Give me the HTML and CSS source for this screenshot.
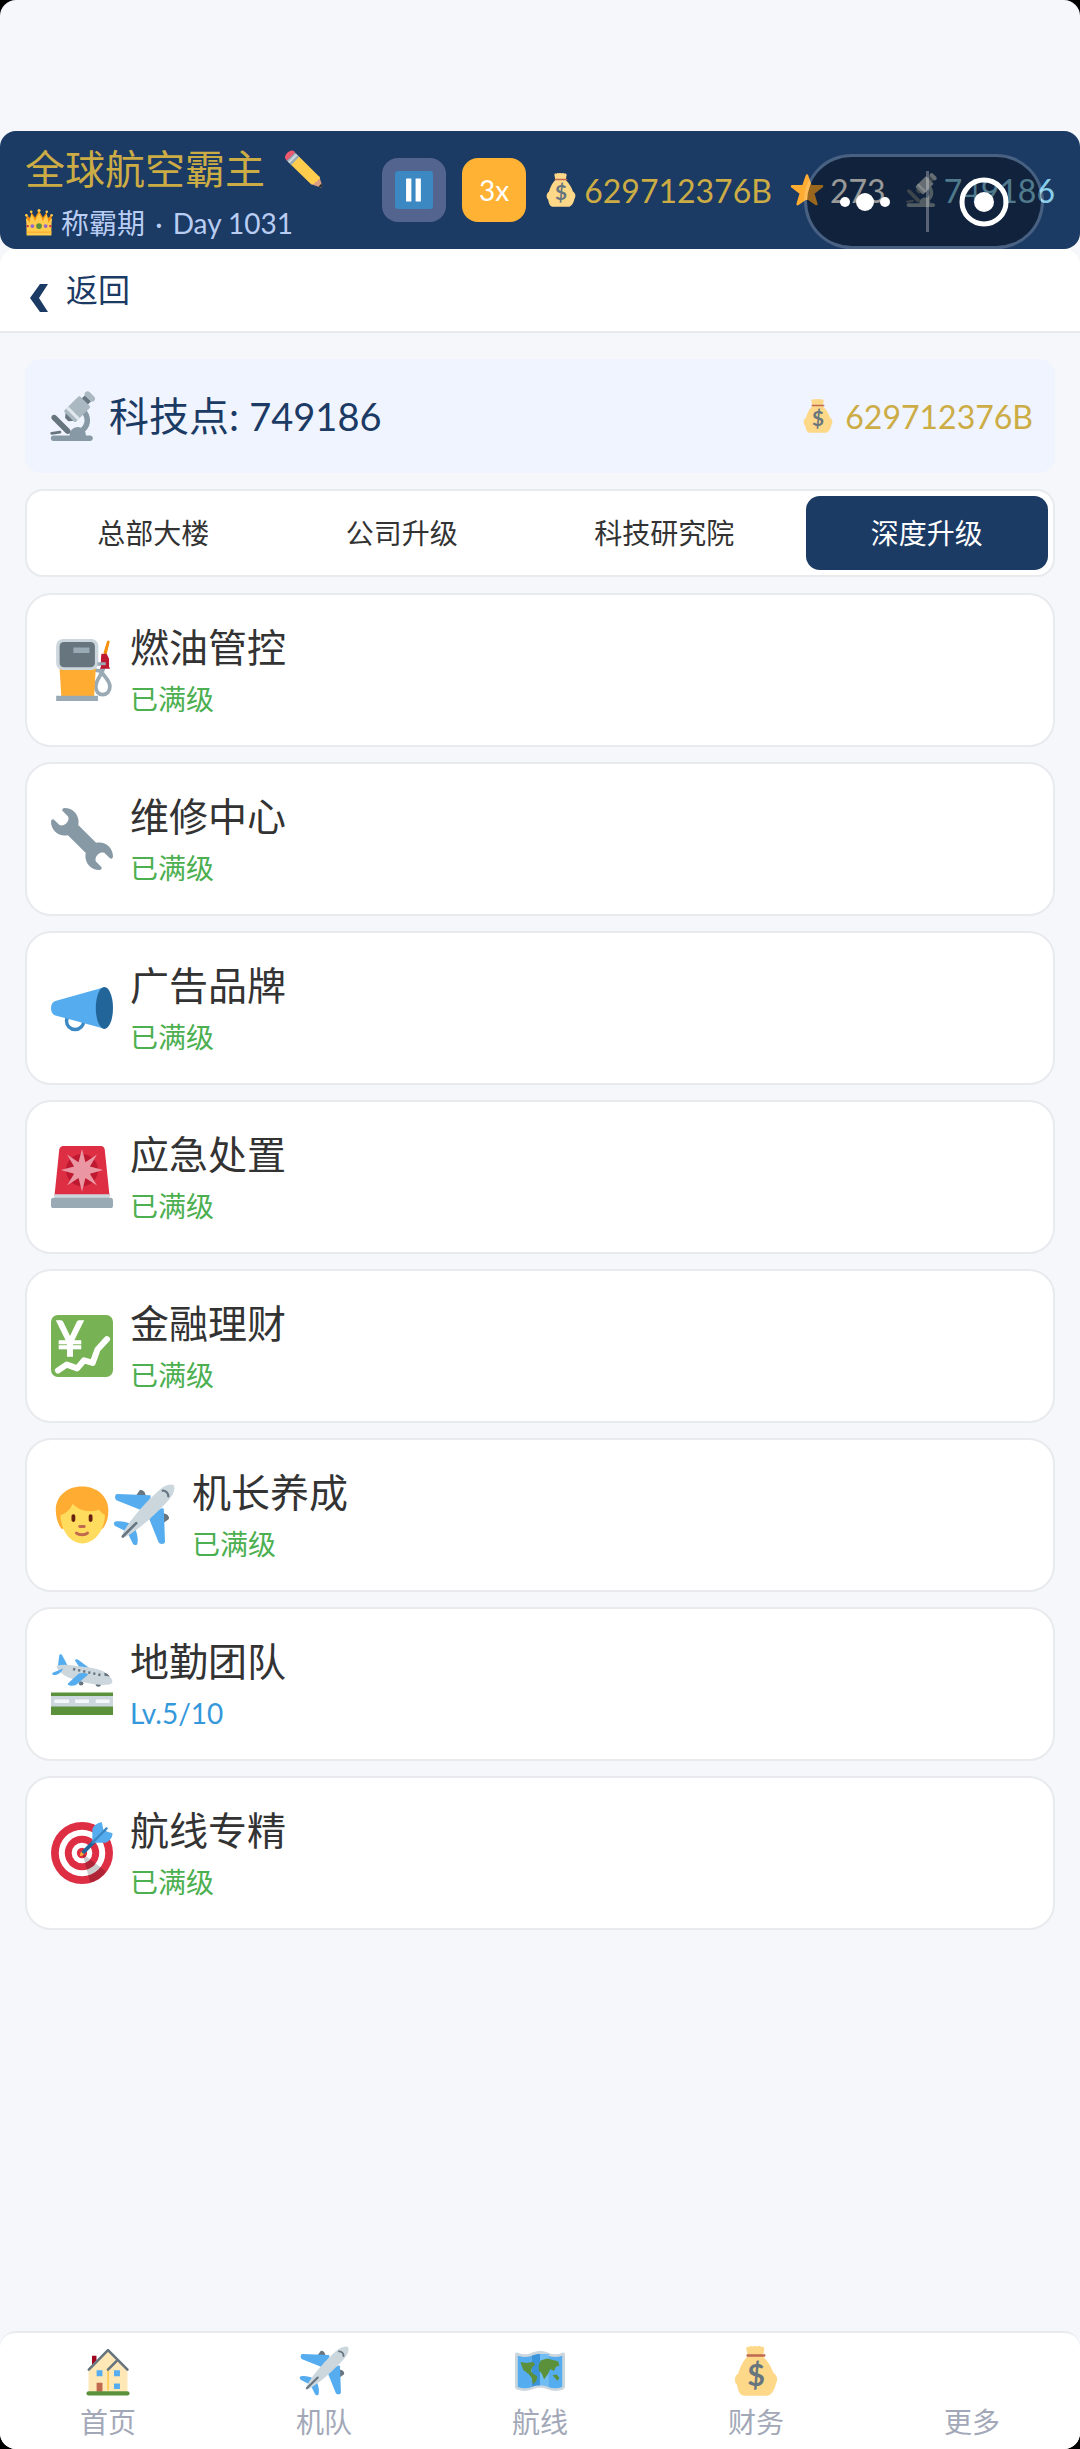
FILE: index.html
```
<!DOCTYPE html>
<html lang="zh-CN">
<head>
  <meta charset="UTF-8" />
  <meta name="viewport" content="width=device-width, initial-scale=1.0" />
  <title>全球航空霸主</title>
  <link rel="stylesheet" href="styles.css">
</head>
<body>
  <!-- icones -->
  <svg class="sprite" aria-hidden="true">
    <symbol id="i-microscope" viewBox="0 0 36 36">
      <path fill="#66757F" d="M19.78 21.345l-6.341-6.342-.389 4.38 2.35 2.351z"/>
      <path fill="#8899A6" d="M31 32h-3c0-3.314-2.63-6-5.875-6-3.244 0-5.875 2.686-5.875 6H4.73c-1.104 0-2 .896-2 2s.896 2 2 2H31c1.104 0 2-.896 2-2s-.896-2-2-2z"/>
      <path fill="#8899A6" d="M20 10v4c3.866 0 7 3.134 7 7s-3.134 7-7 7h-2l2 4c6.075 0 11-4.925 11-11s-4.925-11-11-11z"/>
      <path fill="#67757F" d="M16.414 30.414c-.781.781-2.047.781-2.828 0l-9.899-9.9c-.781-.781-.781-2.047 0-2.828.781-.781 2.047-.781 2.829 0l9.899 9.9c.78.781.78 2.047-.001 2.828zm-7.225-1.786c.547-.077 1.052.304 1.129.851.077.547-.305 1.053-.851 1.129l-5.942.834c-.547.077-1.052-.305-1.129-.851-.077-.547.305-1.053.852-1.13l5.941-.833z"/>
      <path fill="#66757F" d="M27.341 2.98l4.461 4.461-3.806 3.807-4.461-4.461z"/>
      <path fill="#AAB8C2" d="M34.037 7.083c-.827.827-2.17.827-2.997 0l-3.339-3.34c-.827-.826-.827-2.169 0-2.996.827-.826 2.17-.826 2.995 0l3.342 3.34c.826.827.826 2.168-.001 2.996zm-14.56 15.026l-6.802-6.803c-.389-.389-.389-1.025 0-1.414l9.858-9.858c.389-.389 1.025-.389 1.414 0l6.801 6.803c.389.389.389 1.025 0 1.414l-9.858 9.858c-.388.389-1.024.389-1.413 0z"/>
      <path fill="#E1E8ED" d="M13.766 12.8l1.638-1.637 8.216 8.216-1.638 1.637z"/>
    </symbol>

    <symbol id="i-money" viewBox="0 0 36 36">
      <path fill="#FDD888" d="M12 7.500L11 1.800c0-1 1-1.600 2-1 .8-1 2-1 2.700-.3.900-.8 2.300-.8 3.100 0 .9-.8 2.100-.7 2.900.2 1-.5 2.200 0 2.300 1.100l-1 5.700c3 2.500 6 7.500 7.700 12 2.800 2 3.300 5 1.500 8-.6 3.500-3 8.300-6.500 8.300H10c-3.500 0-5-3.200-5.500-7.500-2.500-2.500-2.300-6.500.7-8.500 1.500-5 3.800-9.800 6.800-12.300z"/>
      <path fill="#BF6952" d="M12 6h12c.6 0 .8.400.8.800s-.3.900-.8.900H12c-.6 0-.9-.4-.9-.9s.4-.8.9-.8z"/>
      <text x="18" y="29" text-anchor="middle" font-family="Lato, sans-serif" font-weight="700" font-size="22" fill="#67757F">$</text>
    </symbol>

    <symbol id="i-star" viewBox="0 0 36 36">
      <path fill="#FFAC33" stroke="#FFAC33" stroke-width="2.500" stroke-linejoin="round" d="M18 2.500l4 11.300 12 .2-9.500 7.400 3.500 11.600-10-6.800-10 6.800 3.500-11.600L2 14l12-.2z"/>
    </symbol>

    <symbol id="i-crown" viewBox="0 0 36 36">
      <path fill="#F4900C" d="M3 16L1 7l6 5 1-8 5 7 5-9 5 9 5-7 1 8 6-5-2 9v16H3z"/>
      <path fill="#FFCC4D" d="M2 30c0-8 0-12-1-18 2 1 4 4 5 6 0-4 1-8 2-11 3 3 4 6 5 9 1-4 3-8 5-11 2 3 4 7 5 11 1-3 2-6 5-9 1 3 2 7 2 11 1-2 3-5 5-6-1 6-1 10-1 18v4H2z"/>
      <g fill="#FFCC4D"><circle cx="1.800" cy="8" r="1.700"/><circle cx="8" cy="3.500" r="1.700"/><circle cx="18" cy="2" r="2"/><circle cx="28" cy="3.500" r="1.700"/><circle cx="34.200" cy="8" r="1.700"/></g>
      <circle fill="#5C913B" cx="18" cy="22" r="3.700"/>
      <g fill="#9266CC"><circle cx="9.500" cy="22" r="2.500"/><circle cx="26.500" cy="22" r="2.500"/></g>
      <g fill="#DD2E44"><circle cx="3.500" cy="22" r="1.500"/><circle cx="32.500" cy="22" r="1.500"/></g>
      <path fill="#FFAC33" d="M2 29h32v1.500H2z"/>
    </symbol>

    <symbol id="i-pencil" viewBox="0 0 36 36">
      <path fill="#D99E82" d="M35.200 33.600l-2.800-8.700-8.200 7.300 9.500 3.300c1 .3 1.800-.8 1.500-1.900z"/>
      <path fill="#FFCC4D" d="M12.500 5.500L33 25.800c.5 2-1.300 2-1.800 2.300-.3 1.500-1.300 2.300-2.700 2.200-.2 1.600-1.500 2.500-3.800 2.100L4.700 13z"/>
      <path fill="#99AAB5" d="M9.200 2.200l4.300 4.300-7.600 7.700L1.600 9.900z"/>
      <path fill="#CCD6DD" d="M10.400 3.500l1.500 1.400-7.600 7.700-1.500-1.500z"/>
      <path fill="#EA596E" d="M1 9.300C-.6 7.500-.2 5.200 1.600 3.200 3.500 1.200 6.800-.8 9.200 1.600l.5.600-8.100 8z"/>
      <path fill="#292F33" d="M35.300 33.800l-.8-2-2.800 2.900 2 .7c1 .3 1.800-.6 1.600-1.600z"/>
    </symbol>

    <symbol id="i-pause" viewBox="0 0 36 36">
      <rect fill="#3B88C3" width="36" height="36" rx="3"/>
      <path fill="#FFF" d="M10.500 7h5v22h-5zm9 0h5v22h-5z"/>
    </symbol>

    <symbol id="i-fuel" viewBox="0 0 36 36">
      <path fill="none" stroke="#99AAB5" stroke-width="2.200" d="M24 17c3 2 6 2.500 7-1.500M30.500 15c1 4-4.500 8-4.500 12.500 0 3 1.700 4.800 4 4.800s4.200-1.800 4.200-4.800c0-3-3-5.500-4.200-7.500"/>
      <path fill="#FFAC33" d="M5 17h21l-1 17H6z"/>
      <path fill="#99AAB5" d="M3 33h24.300v3H3z"/>
      <rect fill="#CCD6DD" x="3" width="24.500" height="18" rx="4"/>
      <rect fill="#67757F" x="5" y="1.800" width="20.500" height="14.600" rx="2.500"/>
      <path fill="#99AAB5" d="M13 5h9.300v3.200H13zM27 13.500h5v2h-5z"/>
      <path fill="#F4900C" d="M30.500 8l2-6.500c.5-1 1.800-.6 1.500.5l-2 8z"/>
      <path fill="#BE1931" d="M29.300 8.500h3l1.400 3v5h.5v.800h-5.700v-.800h.5V11z"/>
      <path fill="#99AAB5" d="M28.300 13.500h3.500v1.700h-3.500z"/>
    </symbol>

    <symbol id="i-wrench" viewBox="0 0 36 36">
      <path fill="#8899A6" d="M27.989 19.977c-.622 0-1.225.078-1.806.213L15.811 9.818c.134-.581.212-1.184.212-1.806C16.023 3.587 12.436 0 8.012 0 7.110 0 5.910.916 6.909 1.915l2.997 2.997s.999 1.998-.999 3.995-3.996.998-3.996.998L1.915 6.909C.916 5.910 0 7.105 0 8.012c0 4.425 3.587 8.012 8.012 8.012.622 0 1.225-.078 1.806-.212l10.371 10.371c-.135.581-.213 1.184-.213 1.806 0 4.425 3.588 8.011 8.012 8.011.901 0 2.101-.916 1.102-1.915l-2.997-2.997s-.999-1.998.999-3.995 3.995-.999 3.995-.999l2.997 2.997c1 1 1.916-.194 1.916-1.102 0-4.424-3.587-8.011-8.011-8.011z"/>
    </symbol>

    <symbol id="i-horn" viewBox="0 0 36 36">
      <circle cx="14" cy="25.500" r="5" fill="none" stroke="#3B88C3" stroke-width="2"/>
      <path fill="#55ACEE" d="M31 6L2.500 14C1 14.500 0 16 0 18s1 4 2.500 4.300L31 30z"/>
      <ellipse fill="#226699" cx="31" cy="18" rx="5" ry="12.200"/>
    </symbol>

    <symbol id="i-siren" viewBox="0 0 36 36">
      <path fill="#DD2E44" d="M4.800 2C5 .7 6 0 7 0h22c1.100 0 2 .7 2.200 2L34 29H2z"/>
      <circle fill="#BE1931" cx="18" cy="14" r="9.300"/>
      <path fill="#EA96A3" d="M18 1.800l2 7.600 6.700-4.400-4.100 6.900 7.700 2.100-7.700 2.100 4.100 6.900-6.700-4.400-2 7.900-2-7.900-6.700 4.400 4.100-6.900-7.700-2.100 7.700-2.100L9.300 5 16 9.400z"/>
      <path fill="#CCD6DD" d="M2 28h32v3H2z"/>
      <rect fill="#99AAB5" y="30" width="36" height="6" rx="1.500"/>
    </symbol>

    <symbol id="i-yen" viewBox="0 0 36 36">
      <rect fill="#77B255" width="36" height="36" rx="4"/>
      <text x="11" y="24" text-anchor="middle" font-family="Lato, sans-serif" font-weight="400" font-size="28" fill="#FFF" stroke="#FFF">¥</text>
      <path fill="none" stroke="#FFF" stroke-width="3.500" stroke-linecap="round" stroke-linejoin="round" d="M4 32.200l5.200-3.400 6 2.200 4-4.700 5 1.500L27 20l5.500-6"/>
    </symbol>

    <symbol id="i-person" viewBox="0 0 36 36">
      <path fill="#FFAC33" d="M18 1.500C8.500 1.500 2.500 8 2.800 15.500c.1 4.500 1.500 8 3.200 10.500h24c2-2.500 3.300-6 3.300-10.500C33.500 8 27.500 1.500 18 1.500z"/>
      <path fill="#FFDC5D" d="M5.500 18c3-.5 6-3.500 7-6.500 4 4.500 11 5 15.500 3.500 1 1.500 2 2.500 3.300 3 0 8-5.500 16.500-13.100 16.500S5.500 26 5.500 18z"/>
      <path fill="#662113" d="M13 22c-.6 0-1.100-.5-1.100-1.100v-2.300c0-.6.5-1.100 1.100-1.100s1.100.5 1.100 1.100v2.300c0 .6-.5 1.100-1.100 1.100zm10 0c-.6 0-1.100-.5-1.100-1.100v-2.300c0-.6.5-1.100 1.100-1.100s1.100.5 1.100 1.100v2.300c0 .6-.5 1.100-1.100 1.100z"/>
      <path fill="none" stroke="#C1694F" stroke-width="1.700" stroke-linecap="round" d="M16.700 24.700h2.600M14.800 28.500c1.500 1.300 4.900 1.300 6.400 0"/>
    </symbol>

    <symbol id="i-plane" viewBox="0 0 36 36">
      <path fill="#66757F" d="M13.500 6.500l2-2.800c.8-.7 2.500.3 2.800 1l1 2.500zM29.500 22.500l2.800-2c.7-.8-.3-2.500-1-2.800l-2.500-1z"/>
      <path fill="#55ACEE" d="M2.500 5.800l19 .7c1 .2 0 3-2 5.200l-3.700 3.300L2.300 9.600C.8 9 .8 5.900 2.500 5.800zM30.200 33.500l-.7-19c-.2-1-3 0-5.200 2L21 20.200l5.400 13.500c.6 1.500 3.700 1.500 3.800-.2z"/>
      <path fill="#55ACEE" d="M1.500 21.800c3-.5 6 .2 9.500 1.700l-3.500 4-6-3c-1.300-.7-1.300-2.400 0-2.700zM14.200 34.500c.5-3-.2-6-1.700-9.500l-4 3.500 3 6c.7 1.300 2.400 1.300 2.700 0z"/>
      <path fill="#CCD6DD" d="M35.300.7c1.200 2.500-.6 6-3.300 9C25.500 17 17 24.500 9.500 29.500c-2 1.300-3.500 1.700-4 1.200s0-2 1.200-4C11.500 19 19 10.500 26.300 4c3-2.700 6.500-4.500 9-3.300z"/>
      <path fill="none" stroke="#66757F" stroke-width="1.500" stroke-linecap="round" d="M5.700 30.500l7.800-7.800"/>
      <path fill="none" stroke="#66757F" stroke-width="1.300" stroke-linecap="round" d="M28.800 3.900c1.700-.2 3.500 1.600 3.300 3.300"/>
    </symbol>

    <symbol id="i-landing" viewBox="0 0 36 36">
      <path fill="#5C913B" d="M0 23h36v13H0z"/>
      <path fill="#CCD6DD" d="M0 25h36v6H0z"/>
      <path fill="#F5F8FA" d="M2 27h8.500v2H2zm12 0h8v2h-8zm12 0h8v2h-8z"/>
      <circle fill="#66757F" cx="17.500" cy="17.500" r="1.300"/><circle fill="#66757F" cx="27.500" cy="18" r="1.600"/>
      <path fill="#55ACEE" d="M14 4.500c0-1 1-1 2-.5l6 4.500-5 .5z"/>
      <path fill="#55ACEE" d="M4 8l.8-6.500c.2-1 1.200-1 1.700-.2L10 8z"/>
      <path fill="#CCD6DD" d="M3.500 7.300c5-1 10 0 16 .9 5 .5 10.500 1.300 14 4.800 3 3 3 5-1 5.500-6.500.5-17-2-23-4.500-4-2-7-5.500-6-6.700z"/>
      <path fill="#55ACEE" d="M1 11.500L7 9c-1 2.500-3 4-5.500 3.800-.8-.1-1-.9-.5-1.300zM10 17.500l6-5.500c2-.5 4.500-.5 5.500.6l-7 6c-1.500.7-3.500.5-4.500 0-.4-.3-.3-.8 0-1.100z"/>
      <path fill="none" stroke="#66757F" stroke-width="1.400" stroke-dasharray="1.300 1.700" d="M12.800 9.300l16.500 3.600"/>
      <path fill="#66757F" d="M31 11.500c1.500.3 2.500 1.200 3 2.200l-3-.5z"/>
    </symbol>

    <symbol id="i-target" viewBox="0 0 36 36">
      <circle fill="#DD2E44" cx="18" cy="18" r="18"/>
      <circle fill="#FFF" cx="18" cy="18" r="13.500"/>
      <circle fill="#DD2E44" cx="18" cy="18" r="10"/>
      <circle fill="#FFF" cx="18" cy="18" r="6"/>
      <circle fill="#DD2E44" cx="18" cy="18" r="3"/>
      <path fill="#000" opacity=".2" d="M18.200 18.300l1 3.500 3.500 13.500c4-1 7-3.200 9.300-6.500z"/>
      <path fill="#FFAC33" d="M17 19.700c-.5-1 .3-2.300 1.300-2.500l1 1c-.2 1-1.300 1.700-2.300 1.500z"/>
      <path fill="none" stroke="#269" stroke-width="2.200" stroke-linecap="round" d="M19 17.300L31 5.500"/>
      <path fill="#55ACEE" d="M24 11V4.500C24.300 2.500 27 .3 29.500.2l1 4.800 5.200 1.500c.2 2.500-2.200 5-4 5.500H25z"/>
      <path fill="none" stroke="#3A87C2" stroke-width="1.300" stroke-linecap="round" d="M24 12l8.300-8.300"/>
    </symbol>

    <symbol id="i-house" viewBox="0 0 36 36">
      <path fill="#A0041E" d="M6.500 7h3.200v8H6.500z"/>
      <path fill="#FFE8B6" d="M4 16L18 2l14 14v17H4z"/>
      <path fill="#FFCC4D" d="M17.500 17h1.200v15h-1.200z"/>
      <path fill="none" stroke="#66757F" stroke-width="1.900" stroke-linecap="round" stroke-linejoin="round" d="M4.200 17L18 3l14 14M18 17l7-7"/>
      <path fill="#55ACEE" d="M9.800 17.500H14v4.300H9.800zm12.500 0h4.300v4.300h-4.300zm0 9.500h4.300v4h-4.300z"/>
      <path fill="#C1694F" d="M9.800 26.500H14V33H9.800z"/>
      <rect fill="#5C913B" x="2.500" y="32.500" width="31" height="3.200" rx="1.600"/>
    </symbol>

    <symbol id="i-map" viewBox="0 0 36 36">
      <path fill="#CCD6DD" d="M0 6.500c0-1.500.7-2 2-1.700 4 1.500 7 1.500 10 0 4.500-1.700 8-1.700 12 0 3.500 1.500 6.500 1.500 10 0 1.300-.3 2 .2 2 1.700v22.500c0 1.300-.5 2-1.500 2.300-4 1.500-7.500 1.200-10.500 0-4-1.700-8-1.700-12 0-3.500 1.500-7 1.200-10.500 0C.5 31 0 30.500 0 29.200z"/>
      <path fill="#55ACEE" d="M2 7c4 1.300 7 1.300 10 0v22.500c-3 1.300-6.500 1.200-10 0z"/>
      <path fill="#3B94D9" d="M12 7c2-.9 4-1.300 6-1.300v22.700c-2 0-4 .3-6 1.100z"/>
      <path fill="#6FBDF2" d="M24 5.700v0c2 0 0 .4 0 1.300v22.500c-2-.8-4-1.100-6-1.100V5.700z"/>
      <path fill="#55ACEE" d="M24 7c3.500 1.300 6.500 1.300 10 0v22.500c-3.500 1.200-7 1.300-10 0z"/>
      <path fill="#5C913B" d="M4 11.500l4 .7 5-.7 1.500 2-2 1.500-1 3 1.500 2 3 1.800-.5 3-2.500 3-1-5-2-2.500-4-3-1.500-4zM17 14l1.500-3.500L23 9l8 2 1 3-2.500 1-1.500 3-2.500-1.500-2 4-2.500 3.500-2-4.500-2-2zM27 21l3-.5 2 2.500-1.500 2z"/>
    </symbol>
  </svg>

  <div class="app">
    <header class="topbar">
      <div class="company">
        <div class="company-name">
          <h1>全球航空霸主</h1>
          <button class="edit-btn" aria-label="编辑名称"><svg class="icon-38"><use href="#i-pencil"/></svg></button>
        </div>
        <p class="company-day"><svg class="icon-28"><use href="#i-crown"/></svg><span>称霸期<span class="sep"> · </span>Day 1031</span></p>
      </div>
      <div class="controls">
        <button class="ctrl-btn" aria-label="暂停"><svg class="icon-38"><use href="#i-pause"/></svg></button>
        <button class="ctrl-btn speed">3x</button>
      </div>
      <div class="stats">
        <span class="stat gold"><svg class="icon-34"><use href="#i-money"/></svg>629712376B</span>
        <span class="stat"><svg class="icon-34"><use href="#i-star"/></svg>273</span>
        <span class="stat sky"><svg class="icon-34"><use href="#i-microscope"/></svg>749186</span>
      </div>
      <!-- capsula flotant -->
      <div class="capsule">
        <button class="capsule-btn" aria-label="更多操作">
          <svg class="capsule-dots" viewBox="0 0 52 20"><circle cx="6" cy="10" r="5"/><circle cx="26" cy="10" r="9"/><circle cx="46" cy="10" r="5"/></svg>
        </button>
        <button class="capsule-btn" aria-label="关闭">
          <svg class="capsule-ring" viewBox="0 0 52 52"><circle class="ring" cx="26" cy="26" r="22"/><circle cx="26" cy="26" r="10"/></svg>
        </button>
      </div>
    </header>

    <nav class="backbar">
      <a href="#"><svg class="chevron" viewBox="0 0 18 28"><path d="M10 0h8L9 14l9 14h-8L0 14z"/></svg>返回</a>
    </nav>

    <main>
      <section class="points">
        <p class="points-tech"><svg class="icon-50"><use href="#i-microscope"/></svg><span>科技点: <span class="points-num">749186</span></span></p>
        <p class="points-money"><svg class="icon-34"><use href="#i-money"/></svg>629712376B</p>
      </section>

      <div class="tabs">
        <button class="tab">总部大楼</button>
        <button class="tab">公司升级</button>
        <button class="tab">科技研究院</button>
        <button class="tab active">深度升级</button>
      </div>

      <ul class="cards">
        <li class="card">
          <svg class="icon-62"><use href="#i-fuel"/></svg>
          <div class="card-text"><h2>燃油管控</h2><p>已满级</p></div>
        </li>
        <li class="card">
          <svg class="icon-62"><use href="#i-wrench"/></svg>
          <div class="card-text"><h2>维修中心</h2><p>已满级</p></div>
        </li>
        <li class="card">
          <svg class="icon-62"><use href="#i-horn"/></svg>
          <div class="card-text"><h2>广告品牌</h2><p>已满级</p></div>
        </li>
        <li class="card">
          <svg class="icon-62"><use href="#i-siren"/></svg>
          <div class="card-text"><h2>应急处置</h2><p>已满级</p></div>
        </li>
        <li class="card">
          <svg class="icon-62"><use href="#i-yen"/></svg>
          <div class="card-text"><h2>金融理财</h2><p>已满级</p></div>
        </li>
        <li class="card">
          <svg class="icon-62"><use href="#i-person"/></svg><svg class="icon-62"><use href="#i-plane"/></svg>
          <div class="card-text"><h2>机长养成</h2><p>已满级</p></div>
        </li>
        <li class="card">
          <svg class="icon-62"><use href="#i-landing"/></svg>
          <div class="card-text"><h2>地勤团队</h2><p class="level">Lv.5/10</p></div>
        </li>
        <li class="card">
          <svg class="icon-62"><use href="#i-target"/></svg>
          <div class="card-text"><h2>航线专精</h2><p>已满级</p></div>
        </li>
      </ul>
    </main>

    <nav class="bottombar">
      <a href="#"><svg class="icon-50"><use href="#i-house"/></svg>首页</a>
      <a href="#"><svg class="icon-50"><use href="#i-plane"/></svg>机队</a>
      <a href="#"><svg class="icon-50"><use href="#i-map"/></svg>航线</a>
      <a href="#"><svg class="icon-50"><use href="#i-money"/></svg>财务</a>
      <a href="#"><span class="icon-50"></span>更多</a>
    </nav>
  </div>
</body>
</html>
```
FILE: styles.css
```
:root {
  --navy: #1b3a64;
  --gold: #ccac45;
  --bg: #f5f7fb;
  --line: #e8eaee;
  --text: #333;
}

* {
  box-sizing: border-box;
  margin: 0;
  padding: 0;
}

html {
  background-color: #000;
}

body {
  font-family: Lato, "Noto Sans CJK SC", sans-serif;
  font-size: 28px;
  color: var(--text);
}

button {
  font: inherit;
  color: inherit;
  background: none;
  border: none;
  cursor: pointer;
}

a {
  color: inherit;
  text-decoration: none;
}

svg {
  display: block;
  flex: none;
}

.sprite {
  display: none;
}

.icon-28 { width: 28px; height: 28px; }
.icon-34 { width: 34px; height: 34px; }
.icon-38 { width: 38px; height: 38px; }
.icon-50 { width: 50px; height: 50px; }
.icon-62 { width: 62px; height: 62px; }

.app {
  display: flex;
  flex-direction: column;
  min-height: 100vh;
  padding-top: 131px;
  background-color: var(--bg);
  border-radius: 16px;
  overflow: hidden;
}

/* capçalera */
.topbar {
  position: relative;
  display: flex;
  align-items: center;
  padding: 0 25px;
  background-color: var(--navy);
  border-radius: 16px;
  white-space: nowrap;
}

.company {
  margin-right: auto;
  padding-top: 10px;
}

.company-name {
  display: flex;
  align-items: center;
  gap: 20px;
}

h1 {
  font-size: 40px;
  font-weight: 400;
  line-height: 56px;
  color: var(--gold);
}

.company-day {
  display: flex;
  align-items: center;
  gap: 8px;
  line-height: 52px;
  color: #b9cdf3;
}

.sep {
  margin: 0 3px;
}

.controls {
  display: flex;
  gap: 16px;
  margin-right: 18px;
}

.ctrl-btn {
  display: flex;
  align-items: center;
  justify-content: center;
  width: 64px;
  height: 64px;
  border-radius: 16px;
  background-color: #53648e;
  color: #fff;
}

.ctrl-btn.speed {
  background-color: #ffb233;
}

.stats {
  display: flex;
  gap: 18px;
  font-size: 32px;
  color: #fff;
}

.stat {
  display: flex;
  align-items: center;
  gap: 6px;
}

.stat.gold { color: var(--gold); }
.stat.sky { color: #87ceeb; }

.capsule {
  position: absolute;
  top: 23px;
  right: 36px;
  display: flex;
  width: 240px;
  height: 95px;
  border: 3px solid rgba(255, 255, 255, 0.2);
  border-radius: 48px;
  background-color: rgba(0, 0, 0, 0.4);
  background-clip: padding-box;
}

.capsule-btn {
  display: flex;
  flex: 1;
  align-items: center;
  justify-content: center;
  position: relative;
}

.capsule-btn:first-child {
  padding-right: 4px;
}

.capsule-btn + .capsule-btn::before {
  content: "";
  position: absolute;
  left: 0;
  top: 14px;
  bottom: 14px;
  width: 3px;
  background-color: rgba(255, 255, 255, 0.3);
}

.capsule-dots {
  width: 52px;
  height: 20px;
  fill: #fff;
}

.capsule-ring {
  width: 52px;
  height: 52px;
  fill: #fff;
}

.capsule-ring .ring {
  fill: none;
  stroke: #fff;
  stroke-width: 5;
}

/* tornar */
.backbar {
  padding: 12px 30px;
  background-color: #fff;
  border-bottom: 2px solid var(--line);
  border-radius: 16px 16px 0 0;
}

.backbar a {
  display: inline-flex;
  align-items: center;
  gap: 18px;
  font-size: 32px;
  line-height: 58px;
  color: var(--navy);
}

.chevron {
  width: 18px;
  height: 28px;
  margin-top: 16px;
  fill: var(--navy);
}

main {
  flex: 1;
  padding: 26px 25px;
}

.points {
  display: flex;
  align-items: center;
  justify-content: space-between;
  padding: 28px 22px;
  background-color: #f0f4fe;
  border-radius: 16px;
}

.points-tech {
  display: flex;
  align-items: center;
  gap: 12px;
  font-size: 40px;
  line-height: 58px;
  color: var(--navy);
}

.points-num {
  font-size: 38px;
}

.points-money {
  display: flex;
  align-items: center;
  gap: 10px;
  font-size: 32px;
  color: var(--gold);
}

.tabs {
  display: flex;
  gap: 6px;
  margin: 16px 0;
  padding: 5px;
  background-color: #fff;
  border: 2px solid var(--line);
  border-radius: 18px;
}

.tab {
  flex: 1 1 auto;
  line-height: 74px;
  border-radius: 14px;
  white-space: nowrap;
}

.tab.active {
  background-color: var(--navy);
  color: #fff;
}

.cards {
  display: flex;
  flex-direction: column;
  gap: 15px;
  list-style: none;
}

.card {
  display: flex;
  align-items: center;
  padding: 25px 24px;
  background-color: #fff;
  border: 2px solid var(--line);
  border-radius: 26px;
}

.card-text {
  margin-left: 17px;
}

.card h2 {
  font-size: 39px;
  font-weight: 400;
  line-height: 54px;
}

.card p {
  margin-top: 4px;
  line-height: 42px;
  color: #4caf50;
}

.card .level {
  color: #3498db;
}

/* menu inferior */
.bottombar {
  display: flex;
  padding: 13px 0 7px;
  background-color: #fff;
  border-top: 2px solid var(--line);
  border-radius: 16px 16px 0 0;
}

.bottombar a {
  display: flex;
  flex: 1;
  flex-direction: column;
  align-items: center;
  gap: 6px;
  line-height: 40px;
  color: #a3a8b8;
}
```
